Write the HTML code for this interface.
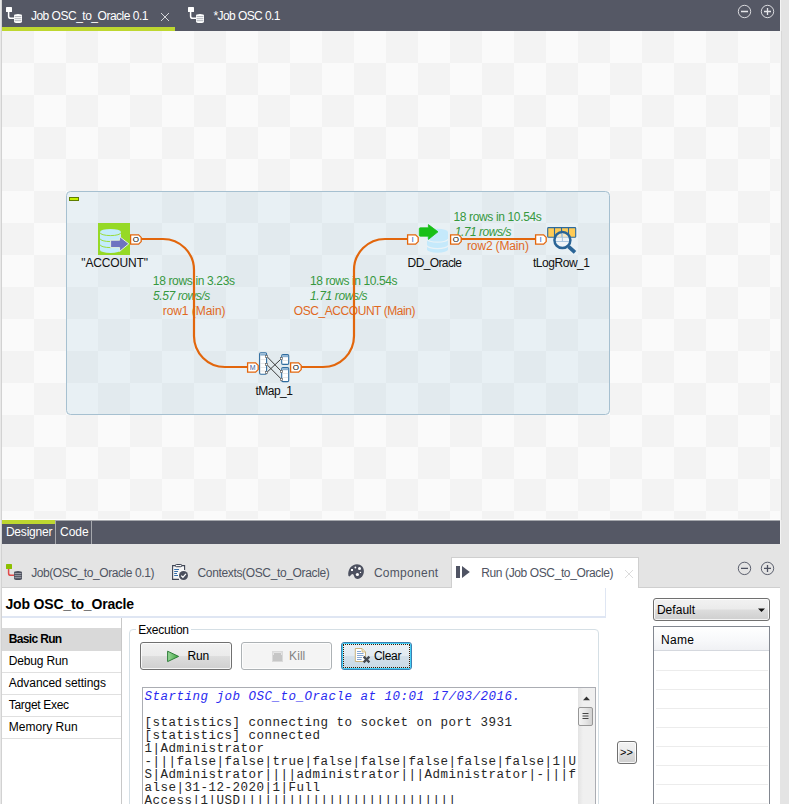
<!DOCTYPE html>
<html lang="en">
<head>
<meta charset="utf-8">
<title>Job OSC_to_Oracle</title>
<style>
html,body{margin:0;padding:0;}
body{width:789px;height:804px;overflow:hidden;background:#e4e4e4;position:relative;font-family:"Liberation Sans",sans-serif;font-size:12px;color:#000;}
.abs{position:absolute;}
.t{position:absolute;white-space:pre;line-height:14px;height:14px;}
.w{color:#fff;}
.g{color:#2f9a48;}
.o{color:#e0691e;}
.tab2{color:#4f5462;}
.lbl{color:#1a0a2a;}
#canvas{left:2px;top:31px;width:778px;height:489px;background:conic-gradient(#fafafa 25%,#f3f3f3 0 50%,#fafafa 0 75%,#f3f3f3 0) 0 0/64px 64px;}
.mono{font-family:"Liberation Mono",monospace;font-size:12.5px;letter-spacing:0.5px;line-height:13px;height:13px;position:absolute;white-space:pre;left:144.5px;color:#262626;}
.btn{position:absolute;box-sizing:border-box;border:1px solid #707070;border-radius:3px;background:linear-gradient(#f2f2f2 0%,#ebebeb 48%,#dddddd 52%,#cfcfcf 100%);box-shadow:inset 0 0 0 1px rgba(255,255,255,.8);}
.row{position:absolute;left:2px;width:119px;height:22px;box-sizing:border-box;border-bottom:1px solid #e3e3e3;}
#jobico .sq{fill:var(--sq);}#jobico .stem{stroke:var(--stem);}#jobico .cyl{fill:var(--cyl);}#jobico .str{stroke:var(--str);}
</style>
</head>
<body>
<!-- left edge -->
<div class="abs" style="left:0;top:0;width:1px;height:804px;background:#e8e8e8"></div>
<div class="abs" style="left:1px;top:0;width:1px;height:804px;background:#d2d2d2"></div>
<!-- right edge -->
<div class="abs" style="left:780px;top:0;width:1px;height:544px;background:#f4f4f4"></div>
<div class="abs" style="left:781px;top:31px;width:1px;height:489px;background:#d8d8d8"></div>

<!-- top tab bar -->
<div class="abs" id="topbar" style="left:2px;top:0;width:778px;height:31px;background:#555865"></div>
<div class="abs" style="left:2px;top:27px;width:173px;height:4px;background:#bed730"></div>
<div class="t w" id="tt1" style="left:30.9px;top:9px;letter-spacing:-0.49px;">Job OSC_to_Oracle 0.1</div>
<div class="t w" id="tt2" style="left:213.4px;top:9px;letter-spacing:-0.57px;">*Job OSC 0.1</div>

<!-- canvas -->
<div class="abs" id="canvas"></div>


<svg class="abs" style="left:0;top:0;z-index:5" width="789" height="804" viewBox="0 0 789 804" font-family="'Liberation Sans',sans-serif">
<!-- subjob box -->
<rect x="66.5" y="191.5" width="543" height="223" rx="4" ry="4" fill="rgba(150,195,215,0.18)" stroke="#a6c0d0" stroke-width="1"/>
<rect x="69.5" y="197.5" width="9" height="3" fill="#c4f000" stroke="#5e7d00" stroke-width="1"/>
<g font-size="12">
<text x="81.3" y="267" fill="#111" textLength="66.7" lengthAdjust="spacing">&quot;ACCOUNT&quot;</text>
<text x="152.8" y="285" fill="#36983e" textLength="82.2" lengthAdjust="spacing">18 rows in 3.23s</text>
<text x="153" y="300" fill="#36983e" font-style="italic" textLength="57.3" lengthAdjust="spacing">5.57 rows/s</text>
<text x="162.7" y="315" fill="#e0691e" textLength="62.8" lengthAdjust="spacing">row1 (Main)</text>
<text x="255.4" y="395" fill="#111" textLength="37.6" lengthAdjust="spacing">tMap_1</text>
<text x="310" y="285" fill="#36983e" textLength="87.6" lengthAdjust="spacing">18 rows in 10.54s</text>
<text x="310" y="300" fill="#36983e" font-style="italic" textLength="57.6" lengthAdjust="spacing">1.71 rows/s</text>
<text x="293.8" y="315" fill="#e0691e" textLength="121.7" lengthAdjust="spacing">OSC_ACCOUNT (Main)</text>
<text x="407.6" y="267" fill="#111" textLength="54.4" lengthAdjust="spacing">DD_Oracle</text>
<text x="453.5" y="221" fill="#36983e" textLength="88.3" lengthAdjust="spacing">18 rows in 10.54s</text>
<text x="454.7" y="236" fill="#36983e" font-style="italic" textLength="56.7" lengthAdjust="spacing">1.71 rows/s</text>
<text x="467" y="250" fill="#e0691e" textLength="61.9" lengthAdjust="spacing">row2 (Main)</text>
<text x="533" y="267" fill="#111" textLength="57.0" lengthAdjust="spacing">tLogRow_1</text>
</g>
<!-- connections -->
<g fill="none" stroke="#e2660c" stroke-width="2.2">
<path d="M141 239 H163 A31 31 0 0 1 194 270 V336 A31 31 0 0 0 225 367 H247"/>
<path d="M301 367 H323 A31 31 0 0 0 354 336 V270 A31 31 0 0 1 385 239 H407"/>
<path d="M461 239 H535"/>
</g>
<!-- connectors -->
<g fill="#fff" stroke="#e2660c" stroke-width="1.3">
<path d="M130.6 234.8 H138.6 L141.2 237.4 V241.6 L138.6 244.2 H130.6 Z"/>
<path d="M247.6 362.8 H255.6 L258.2 365.4 V369.6 L255.6 372.2 H247.6 Z"/>
<path d="M290.6 362.8 H298.6 L301.2 365.4 V369.6 L298.6 372.2 H290.6 Z"/>
<path d="M407.6 234.8 H415.6 L418.2 237.4 V241.6 L415.6 244.2 H407.6 Z"/>
<path d="M450.6 234.8 H458.6 L461.2 237.4 V241.6 L458.6 244.2 H450.6 Z"/>
<path d="M535.6 234.8 H543.6 L546.2 237.4 V241.6 L543.6 244.2 H535.6 Z"/>
</g>
<g font-size="8" text-anchor="middle" fill="#000">
<text x="135.8" y="242.2">O</text>
<text x="252.6" y="370" fill="#3a5a9a" font-size="7">M</text>
<text x="295.8" y="370.2">O</text>
<text x="412.6" y="242.2" fill="#2a6ac0">I</text>
<text x="455.8" y="242.2">O</text>
<text x="540.6" y="242.2" fill="#2a6ac0">I</text>
</g>
<!-- ACCOUNT icon -->
<rect x="98" y="223" width="32" height="32" fill="#96d926"/>
<path d="M100 232 V250 A10.5 3 0 0 0 121 250 V232 Z" fill="#c4ecfb"/>
<ellipse cx="110.5" cy="232" rx="10.5" ry="3.1" fill="#c4ecfb"/>
<g fill="none" stroke="#96d926" stroke-width="0.9">
<path d="M100 232.6 A10.5 3 0 0 0 121 232.6"/>
<path d="M100 238.6 A10.5 3 0 0 0 121 238.6"/>
<path d="M100 244.6 A10.5 3 0 0 0 121 244.6"/>
</g>
<path d="M110.6 240.2 H119.6 V236.6 L128.8 243.8 L119.6 251.4 V247.6 H110.6 Z" fill="#6e74c0" stroke="#e4f2e0" stroke-width="1" stroke-linejoin="round"/>
<!-- tMap icon -->
<g>
<rect x="259.6" y="352.8" width="7" height="21.5" rx="1.2" fill="#fff" stroke="#2f6c9f" stroke-width="1.1"/>
<rect x="260.2" y="353.4" width="5.8" height="2.2" fill="#8ab0d0"/>
<path d="M260.2 359.5 H266 M260.2 363.5 H266 M260.2 367.5 H266 M260.2 371 H266" stroke="#d8d8d8" stroke-width="0.6"/>
<rect x="281.7" y="354.6" width="7" height="9.8" rx="1.2" fill="#fff" stroke="#2f6c9f" stroke-width="1.1"/>
<rect x="282.3" y="355.2" width="5.8" height="2" fill="#8ab0d0"/>
<path d="M282.3 360.5 H288.1" stroke="#d8d8d8" stroke-width="0.6"/>
<rect x="281.7" y="367.6" width="7" height="14" rx="1.2" fill="#fff" stroke="#2f6c9f" stroke-width="1.1"/>
<rect x="282.3" y="368.2" width="5.8" height="2" fill="#8ab0d0"/>
<path d="M282.3 373.5 H288.1 M282.3 377.5 H288.1" stroke="#d8d8d8" stroke-width="0.6"/>
<path d="M266.8 356.4 L281.5 371.5 M266.8 364.5 L281.5 379.3 M266.8 372.4 L281.5 358.6" stroke="#3c3c3c" stroke-width="1" fill="none"/>
<g fill="#fff" stroke="#666" stroke-width="0.7">
<rect x="265.6" y="355.4" width="2" height="2"/><rect x="265.6" y="363.5" width="2" height="2"/><rect x="265.6" y="371.4" width="2" height="2"/>
<rect x="280.6" y="357.6" width="2" height="2"/><rect x="280.6" y="370.5" width="2" height="2"/><rect x="280.6" y="378.3" width="2" height="2"/>
</g>
</g>
<!-- DD_Oracle icon -->
<g fill="#c5e9fb">
<path d="M427 232 V249.6 A10.5 3.2 0 0 0 448 249.6 V232 Z"/>
<ellipse cx="437.5" cy="232" rx="10.5" ry="3.2"/>
</g>
<g fill="none" stroke="#eaf2f6" stroke-width="1.2">
<path d="M427 239 A10.5 3.2 0 0 0 448 239"/>
<path d="M427 245.4 A10.5 3.2 0 0 0 448 245.4"/>
</g>
<path d="M420.2 227.8 H428.4 V224.6 L438 231.8 L428.4 239.4 V236.2 H420.2 Q419.3 236.2 419.3 235.2 V228.8 Q419.3 227.8 420.2 227.8 Z" fill="#18c018" stroke="#18c018" stroke-width="0.8" stroke-linejoin="round"/>
<!-- tLogRow icon -->
<rect x="547.7" y="227.6" width="28" height="9.6" rx="0.8" fill="#ffcb55" stroke="#2d6a9c" stroke-width="1.1"/>
<path d="M554.5 227.6 V237.2 M561.5 227.6 V237.2 M568.5 227.6 V237.2" stroke="#2d6a9c" stroke-width="1.1"/>
<circle cx="562.4" cy="240.1" r="8" fill="rgba(245,248,250,0.65)" stroke="#2a6496" stroke-width="2.5"/>
<path d="M562.4 233.5 V241.5 M556 241.5 H569" stroke="#9fc0dc" stroke-width="0.9" fill="none"/>
<path d="M568.6 246.6 L575 252.4" stroke="#2a6496" stroke-width="3.8" stroke-linecap="butt"/>

<!-- job icons -->
<defs>
<g id="jobico">
<path d="M2.6 5 V9.2 Q2.6 11.3 4.8 11.3 H8.5" fill="none" stroke-width="1.5" class="stem"/>
<rect x="0" y="0" width="6" height="5" rx="0.6" class="sq"/>
<path d="M8 8.6 V14.6 A4 1.5 0 0 0 16 14.6 V8.6 A4 1.5 0 0 0 8 8.6 Z" class="cyl"/>
<path d="M8.6 9.6 H15.4 M8.6 11.7 H15.4 M8.6 13.7 H15.4" fill="none" stroke-width="0.7" class="str"/>
</g>
</defs>
<use href="#jobico" x="6" y="7" style="--sq:#fff;--stem:#fff;--cyl:#fff;--str:#8c909c"/>
<use href="#jobico" x="188" y="7" style="--sq:#fff;--stem:#fff;--cyl:#fff;--str:#8c909c"/>
<use href="#jobico" x="6" y="564" style="--sq:#8cc000;--stem:#e04a4a;--cyl:#4b4f5c;--str:#c8cad0"/>
<!-- close x top -->
<path d="M161 13 L169 21 M169 13 L161 21" stroke="#d4d5d9" stroke-width="1" fill="none"/>
<!-- top min/max -->
<g fill="none" stroke="#e6e6ea" stroke-width="0.9">
<circle cx="744.5" cy="11.5" r="6.2"/><circle cx="767.5" cy="11.5" r="6.2"/>
<path d="M741 11.5 H748 M764 11.5 H771 M767.5 8 V15" stroke-width="1.3"/>
</g>
<!-- bottom min/max -->
<g fill="none" stroke="#4d5161" stroke-width="0.9">
<circle cx="744.5" cy="568.4" r="6.2"/><circle cx="767.5" cy="568.4" r="6.2"/>
<path d="M741 568.4 H748 M764 568.4 H771 M767.5 564.9 V571.9" stroke-width="1.3"/>
</g>
<!-- close x run tab -->
<path d="M625 570 L633 578 M633 570 L625 578" stroke="#dcdcdc" stroke-width="1" fill="none"/>
<!-- contexts icon -->
<path d="M172.6 565.6 H184.6 V579.4 H172.6 Z" fill="#f6f6f6" stroke="none"/>
<path d="M184.6 570 V565.6 H172.6 V579.4 H179" fill="none" stroke="#3f4555" stroke-width="1.1"/>
<rect x="175.4" y="564.5" width="6.4" height="2.2" rx="1" fill="#f6f6f6" stroke="#3f4555" stroke-width="1"/>
<path d="M174.2 569.5 H179 M174.2 571.5 H178 M174.2 573.5 H177 M174.2 575.5 H178" stroke="#1f5fa0" stroke-width="0.9" fill="none"/>
<circle cx="183.5" cy="575.5" r="4.5" fill="#4a4e5c"/>
<path d="M181.2 575.6 L182.9 577.3 L185.9 573.8" stroke="#fff" stroke-width="1.3" fill="none"/>
<!-- palette icon -->
<path d="M348.3 575.2 C347.6 569.5 351.5 564.2 357 564.2 C361.2 564.2 363.9 567.2 363.9 571 C363.9 575.6 360.8 578.9 357.6 578.9 C354.6 578.9 354.4 576.6 353.4 574.6 C352.6 573.2 351.4 574.2 350.6 575.6 C349.8 576.8 348.5 576.6 348.3 575.2 Z" fill="#4d5160"/>
<g fill="#fff">
<rect x="351" y="569" width="2" height="2"/>
<circle cx="355.4" cy="567.5" r="0.9"/>
<circle cx="359.5" cy="568.5" r="1.5"/>
<circle cx="360.5" cy="572.4" r="0.7"/>
<circle cx="357.4" cy="574.5" r="1.6"/>
</g>
<!-- run icon -->
<rect x="456" y="566" width="4" height="12" fill="#4f5363"/>
<path d="M462 566 L469.8 572 L462 578 Z" fill="#4f5363"/>

<!-- run button icon -->
<defs><linearGradient id="gplay" x1="0" y1="0" x2="1" y2="0"><stop offset="0" stop-color="#9ad89a"/><stop offset="1" stop-color="#3fa53f"/></linearGradient></defs>
<path d="M167.6 651.2 L178.6 656.4 L167.6 661.6 Z" fill="url(#gplay)" stroke="#2f7d3a" stroke-width="1" stroke-linejoin="round"/>
<!-- kill icon -->
<rect x="272.5" y="651.5" width="10" height="10" fill="#c6c6c6" stroke="#dadada" stroke-width="1"/>
<path d="M273.5 655 V652.5 H281.5 V655" fill="none" stroke="#eeeeee" stroke-width="0.8"/>
<!-- clear icon -->
<path d="M355.3 648.5 H362 L365.5 652 V661.5 H355.3 Z" fill="#fff" stroke="#c9b27e" stroke-width="1"/>
<path d="M362 648.5 V652 H365.5" fill="#f3e6bf" stroke="#c9b27e" stroke-width="0.8"/>
<path d="M357 651.5 H361 M357 653.5 H363.5 M357 655.5 H363.5 M357 657.5 H362 M357 659.5 H361.5" stroke="#4f7fc0" stroke-width="0.7" fill="none"/>
<path d="M363.6 656.6 L369.4 662.4 M369.4 656.6 L363.6 662.4" stroke="#454a52" stroke-width="2.2" fill="none"/>
<!-- scrollbar arrow -->
<path d="M583 700.2 L586.5 696.4 L590 700.2 Z" fill="#333"/>
<path d="M582.5 713.5 H588.5 M582.5 716 H588.5 M582.5 718.5 H588.5" stroke="#444" stroke-width="1" fill="none"/>
<!-- combo arrow -->
<path d="M758 608.5 H765 L761.5 612 Z" fill="#111"/>
</svg>

<!-- designer/code bar -->
<div class="abs" style="left:2px;top:520px;width:778px;height:24px;background:#555865"></div>
<div class="abs" style="left:2px;top:520px;width:778px;height:1px;background:#a6a8ad"></div>
<div class="abs" style="left:2px;top:519px;width:778px;height:1px;background:#fdfdfd"></div>
<div class="abs" style="left:2px;top:520px;width:53px;height:4px;background:#bed730"></div>
<div class="abs" style="left:55px;top:520px;width:1px;height:24px;background:#a6a8ad"></div>
<div class="abs" style="left:91px;top:520px;width:1px;height:24px;background:#a6a8ad"></div>
<div class="t w" id="td1" style="left:5.9px;top:525px;letter-spacing:-0.20px;">Designer</div>
<div class="t w" id="td2" style="left:60.0px;top:525px;letter-spacing:0.00px;">Code</div>

<!-- lower panel -->
<div class="abs" id="lower" style="left:2px;top:588px;width:778px;height:216px;background:#fff"></div>
<div class="abs" style="left:2px;top:587px;width:778px;height:1px;background:#cfcfcf"></div>
<div class="abs" id="runtab" style="left:451px;top:557px;width:188px;height:31px;background:#fff;box-sizing:border-box;border:1px solid #cfcfcf;border-bottom:none;"></div>
<div class="t tab2" id="tb1" style="left:31.2px;top:566px;letter-spacing:-0.42px;">Job(OSC_to_Oracle 0.1)</div>
<div class="t tab2" id="tb2" style="left:197.5px;top:566px;letter-spacing:-0.35px;">Contexts(OSC_to_Oracle)</div>
<div class="t tab2" id="tb3" style="left:373.9px;top:566px;letter-spacing:0.28px;">Component</div>
<div class="t tab2" id="tb4" style="left:481.3px;top:566px;letter-spacing:-0.39px;">Run (Job OSC_to_Oracle)</div>

<!-- title -->
<div class="abs" style="left:2px;top:588px;width:603px;height:28px;border-right:1px solid #dfe6f3;border-bottom:2px solid #dfe6f3;box-sizing:content-box;"></div>
<div class="t" id="title" style="left:5.5px;top:596px;font-size:14px;font-weight:bold;line-height:16px;height:16px;letter-spacing:-0.18px;">Job OSC_to_Oracle</div>

<!-- sidebar -->
<div class="abs" style="left:121px;top:618px;width:1px;height:186px;background:#c8c8c8"></div>
<div class="abs" style="left:2px;top:628px;width:119px;height:23px;background:#d9d9d9"></div>
<div class="abs" style="left:2px;top:672px;width:119px;height:1px;background:#e0e0e0"></div>
<div class="abs" style="left:2px;top:694px;width:119px;height:1px;background:#e0e0e0"></div>
<div class="abs" style="left:2px;top:716px;width:119px;height:1px;background:#e0e0e0"></div>
<div class="abs" style="left:2px;top:738px;width:119px;height:1px;background:#e0e0e0"></div>
<div class="t" id="s1" style="left:8.8px;top:632px;font-weight:bold;letter-spacing:-0.67px;">Basic Run</div>
<div class="t" id="s2" style="left:8.8px;top:654px;letter-spacing:-0.18px;">Debug Run</div>
<div class="t" id="s3" style="left:8.8px;top:676px;letter-spacing:-0.06px;">Advanced settings</div>
<div class="t" id="s4" style="left:8.8px;top:698px;letter-spacing:-0.31px;">Target Exec</div>
<div class="t" id="s5" style="left:8.8px;top:720px;letter-spacing:0.02px;">Memory Run</div>

<!-- execution group -->
<div class="abs" style="left:129px;top:629px;width:470px;height:190px;box-sizing:border-box;border:1px solid #d5dfe5;border-radius:4px;"></div>
<div class="abs" style="left:136px;top:624px;width:55px;height:12px;background:#fff"></div>
<div class="t" id="ex" style="left:138.2px;top:623px;letter-spacing:-0.23px;">Execution</div>

<div class="btn" style="left:140px;top:642px;width:92px;height:28px;"></div>
<div class="t" id="b1" style="left:187.5px;top:649px;letter-spacing:-0.11px;">Run</div>
<div class="btn" style="left:241px;top:642px;width:91px;height:28px;background:#f4f4f4;border-color:#adb2b5;"></div>
<div class="t" id="b2" style="left:289.1px;top:649px;color:#838383;letter-spacing:0.06px;">Kill</div>
<div class="btn" style="left:341px;top:642px;width:71px;height:28px;border-color:#3c7fb1;background:linear-gradient(#eaf0f5 0%,#e3ebf2 48%,#d3e0ea 52%,#c8d9e6 100%);box-shadow:inset 0 0 0 1px #46d0f6;"></div>
<div class="abs" style="left:343px;top:644px;width:67px;height:24px;box-sizing:border-box;border:1px dotted #3a1a00;"></div>
<div class="t" id="b3" style="left:374.0px;top:649px;letter-spacing:-0.30px;">Clear</div>

<!-- console -->
<div class="abs" style="left:142px;top:687px;width:454px;height:130px;box-sizing:border-box;border:1px solid #abadb3;background:#fff"></div>
<div class="mono" style="top:691px;color:#2a2af0;font-style:italic;">Starting job OSC_to_Oracle at 10:01 17/03/2016.</div>
<div class="mono" style="top:717px;">[statistics] connecting to socket on port 3931</div>
<div class="mono" style="top:730px;">[statistics] connected</div>
<div class="mono" style="top:743px;">1|Administrator</div>
<div class="mono" style="top:756px;">-|||false|false|true|false|false|false|false|false|1|U</div>
<div class="mono" style="top:769px;">S|Administrator||||administrator|||Administrator|-|||f</div>
<div class="mono" style="top:782px;">alse|31-12-2020|1|Full</div>
<div class="mono" style="top:795px;">Access|1|USD|||||||||||||||||||||||||||</div>
<!-- scrollbar -->
<div class="abs" style="left:578px;top:688px;width:17px;height:116px;background:linear-gradient(90deg,#e3e3e3,#f0f0f0 30%,#f0f0f0)"></div>
<div class="abs" style="left:578px;top:707px;width:15px;height:19px;box-sizing:border-box;border:1px solid #979797;border-radius:2px;background:linear-gradient(90deg,#f4f4f4,#e6e6e6 50%,#d2d2d2)"></div>

<!-- >> button -->
<div class="btn" style="left:617px;top:741px;width:20px;height:23px;"></div>
<div class="t" id="gg" style="left:620px;top:745px;font-size:11px;">&gt;&gt;</div>

<!-- combo -->
<div class="btn" style="left:653px;top:598px;width:117px;height:23px;"></div>
<div class="t" id="cb" style="left:656.9px;top:603px;letter-spacing:0.04px;">Default</div>
<!-- table -->
<div class="abs" style="left:653px;top:626px;width:117px;height:190px;box-sizing:border-box;border:1px solid #828790;background:#fff"></div>
<div class="abs" style="left:654px;top:627px;width:115px;height:23px;background:linear-gradient(#ffffff,#f7f8fa 60%,#f0f1f4);border-bottom:1px solid #d5d8de;box-sizing:content-box;"></div>
<div class="abs" style="left:656px;top:670px;width:112px;height:1px;background:#ececec"></div>
<div class="abs" style="left:656px;top:689px;width:112px;height:1px;background:#ececec"></div>
<div class="abs" style="left:656px;top:708px;width:112px;height:1px;background:#ececec"></div>
<div class="abs" style="left:656px;top:727px;width:112px;height:1px;background:#ececec"></div>
<div class="abs" style="left:656px;top:746px;width:112px;height:1px;background:#ececec"></div>
<div class="abs" style="left:656px;top:765px;width:112px;height:1px;background:#ececec"></div>
<div class="abs" style="left:656px;top:784px;width:112px;height:1px;background:#ececec"></div>
<div class="abs" style="left:656px;top:803px;width:112px;height:1px;background:#ececec"></div>
<div class="t" id="nm" style="left:661.1px;top:633px;letter-spacing:0.26px;">Name</div>

</body>
</html>
